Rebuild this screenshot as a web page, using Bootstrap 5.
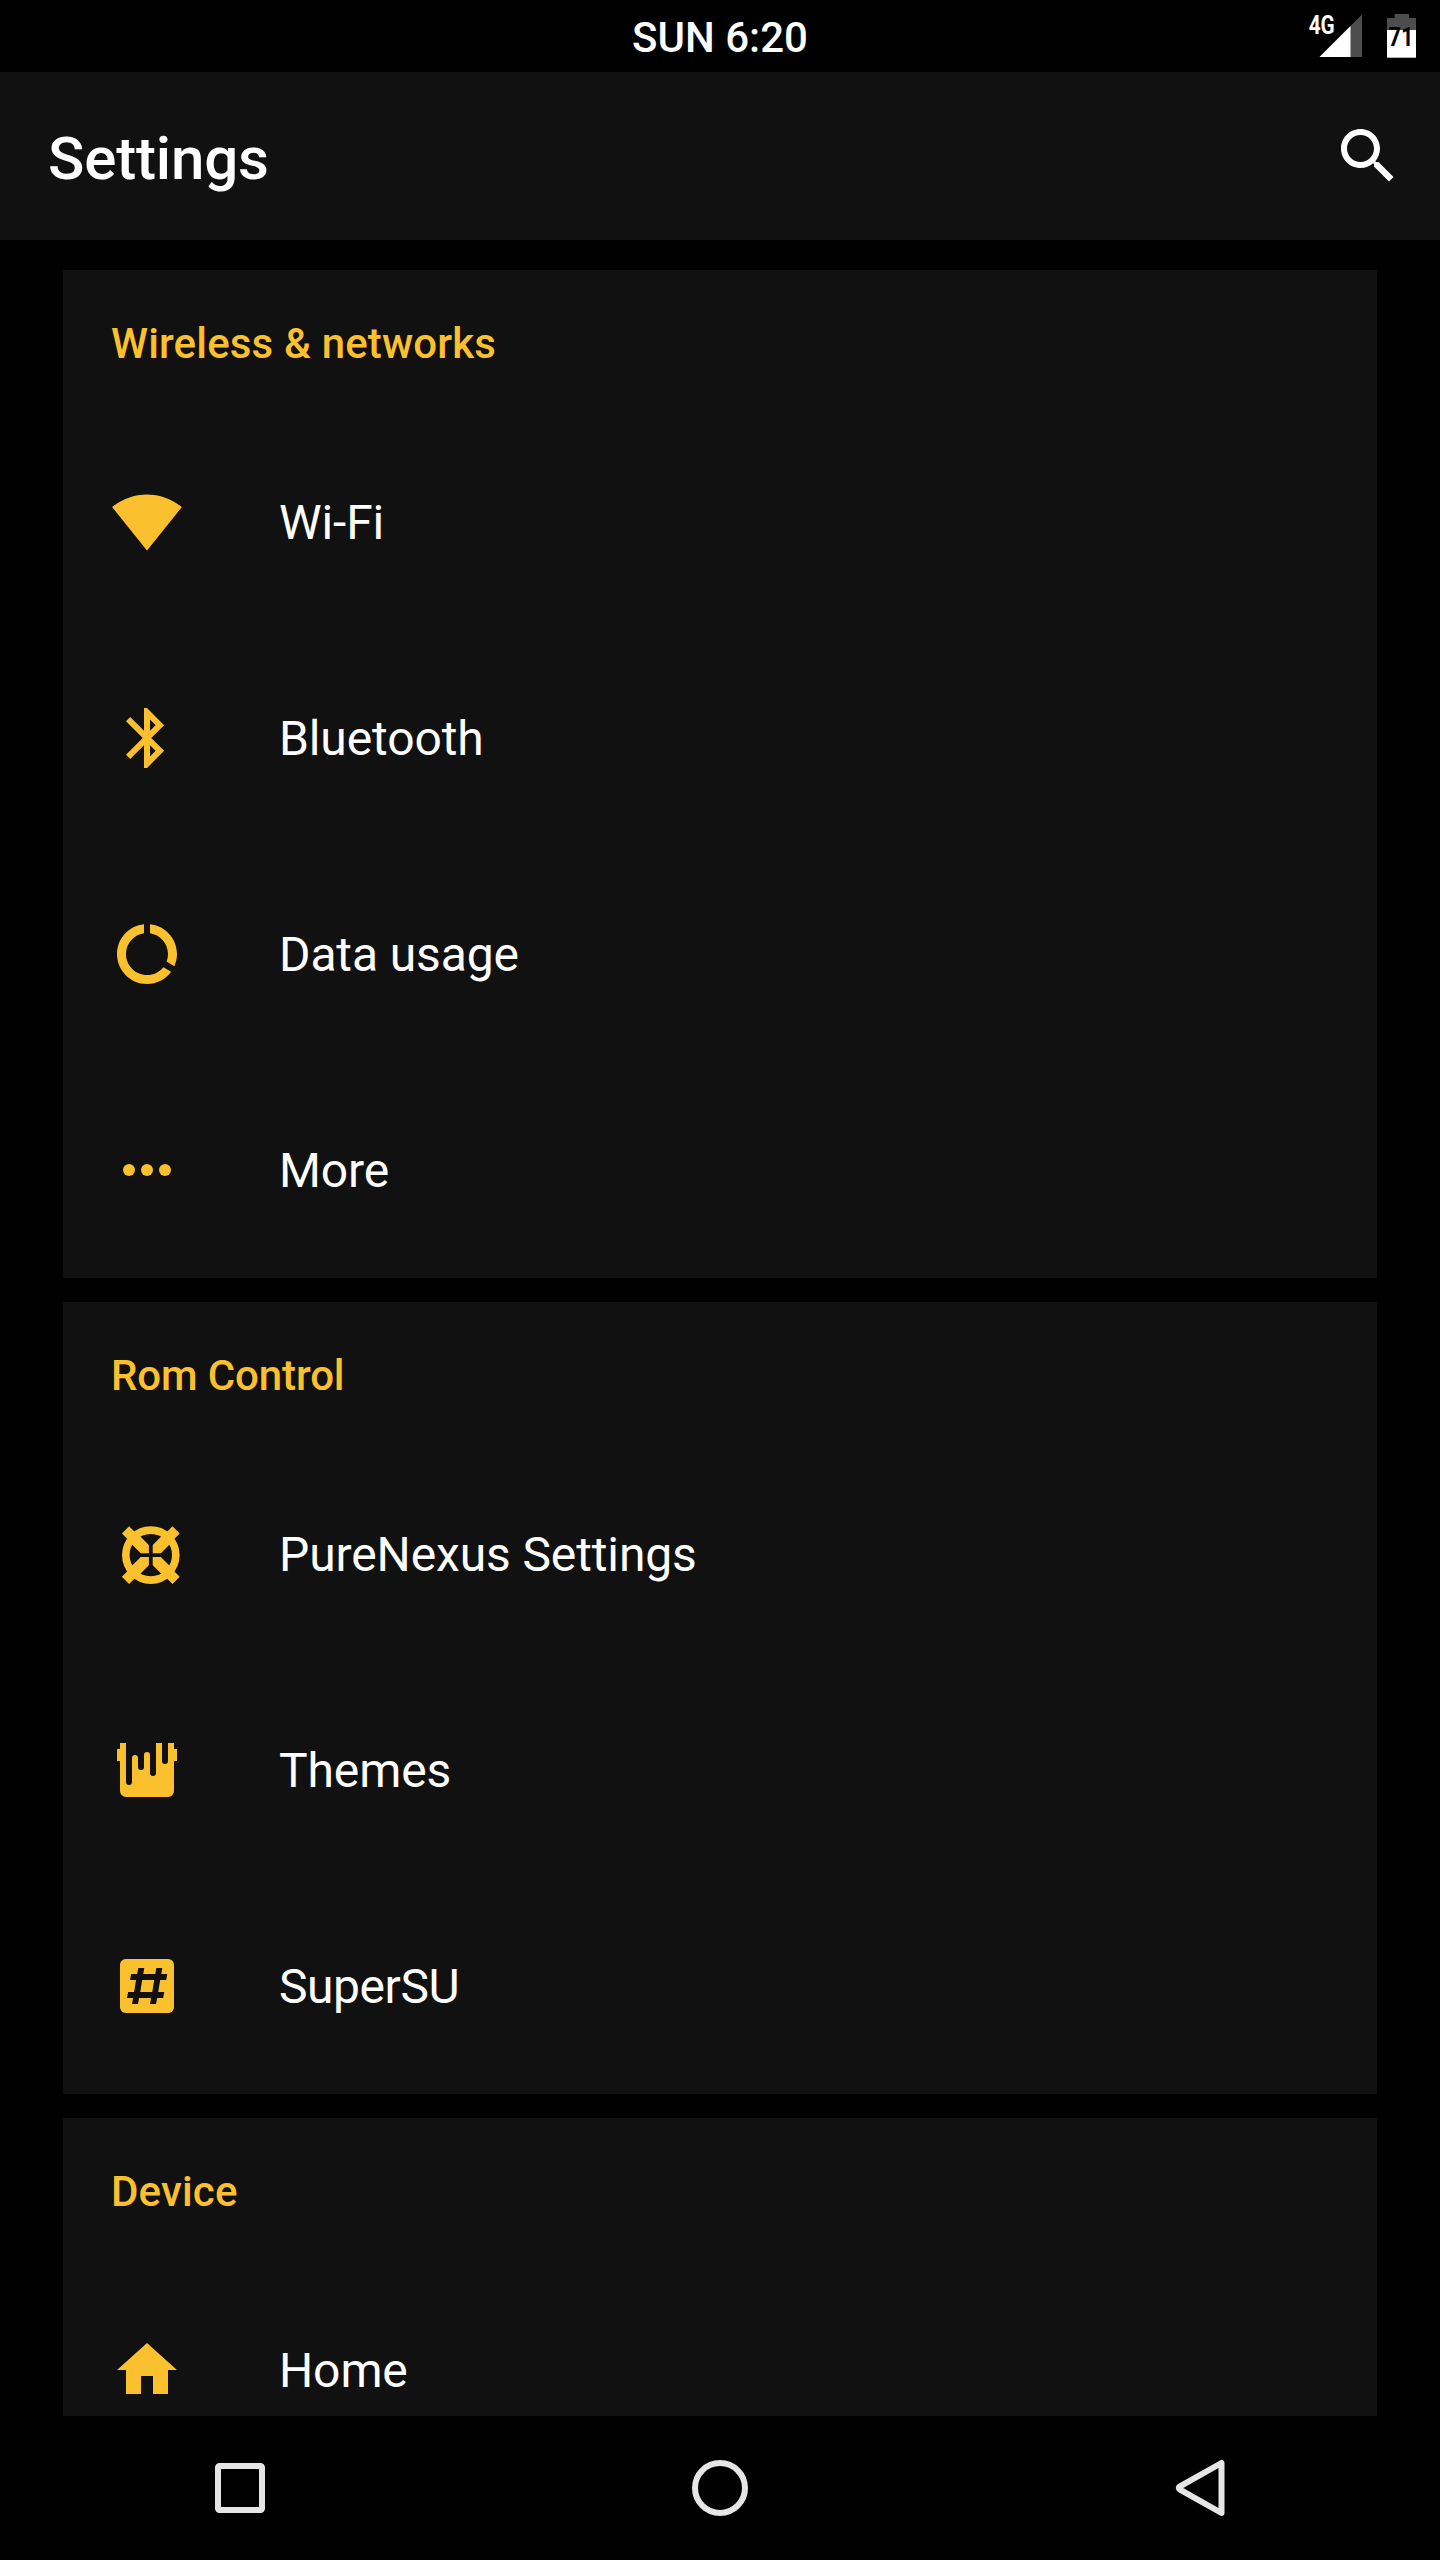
<!DOCTYPE html>
<html lang="en">
<head>
<meta charset="utf-8">
<meta name="viewport" content="width=device-width, initial-scale=1">
<title>Settings</title>
<link href="https://cdn.jsdelivr.net/npm/bootstrap@5.3.0/dist/css/bootstrap.min.css" rel="stylesheet">
<style>
  body { background: #000; color: #fff; font-family: Roboto, sans-serif; }
  .screen { width: 1440px; height: 2560px; }
  .status { display: grid; grid-template-columns: 1fr auto 1fr; height: 72px; padding: 0 20px; }
  .clock { font-size: 42px; line-height: 50px; font-weight: 500; padding-top: 4px; }
  .appbar { height: 168px; padding: 0 36px 0 48px; background: #111; }
  .appbar h1 { font-size: 60px; font-weight: 500; line-height: 72px; padding-top: 6px; letter-spacing: -.15px; }
  .content-area { min-height: 0; padding: 30px 63px 0; gap: 24px; }
  .panel { background: #111; border: 0; border-radius: 0; color: #fff; }
  .panel-title { height: 144px; padding: 3px 48px 0; color: #fbc02d; font-size: 42px; font-weight: 500; line-height: 50px; }
  .entry { height: 216px; padding: 0 48px; gap: 96px; background: transparent; border: 0; color: #fff; font-size: 48px; line-height: 56px; }
  .entry span { padding-top: 2px; letter-spacing: -.12px; }
  .entry .tight { letter-spacing: -.45px; }
  .loose { letter-spacing: .16px; }
  .snug { letter-spacing: -.12px; }
  .glyph { width: 72px; height: 72px; fill: #fbc02d; }
  .softkeys { height: 144px; background: #000; }
  .softkeys svg { width: 72px; height: 72px; fill: none; stroke: #e6e6e6; stroke-width: 6; }
</style>
</head>
<body>
<div class="screen d-flex flex-column overflow-hidden">
  <header class="status align-items-center flex-shrink-0">
    <span></span>
    <span class="clock">SUN 6:20</span>
    <svg class="ms-auto" width="112" height="72" viewBox="0 0 112 72">
      <path d="M11.5 57H54V14.5z" fill="#4d4d4d"/>
      <path d="M11.5 57H42.5V26z" fill="#fff"/>
      <text x="0.7" y="33.5" font-size="25.5" font-weight="700" fill="#fff" textLength="26" lengthAdjust="spacingAndGlyphs">4G</text>
      <path d="M79 30V18h7.5v-4H101v4h7v12z" fill="#4d4d4d"/>
      <path d="M79 30h29v27.7H79z" fill="#fff"/>
      <text x="80.5" y="46" font-size="26" font-weight="700" fill="#000" textLength="25" lengthAdjust="spacingAndGlyphs">71</text>
    </svg>
  </header>

  <nav class="appbar d-flex align-items-center justify-content-between flex-shrink-0">
    <h1 class="mb-0">Settings</h1>
    <svg width="72" height="72" viewBox="0 0 24 24" fill="#fff"><path d="M15.5 14h-.79l-.28-.27C15.41 12.59 16 11.11 16 9.5 16 5.91 13.09 3 9.5 3S3 5.91 3 9.5 5.91 16 9.5 16c1.61 0 3.09-.59 4.23-1.57l.27.28v.79l5 4.99L20.49 19l-4.99-5zm-6 0C7.01 14 5 11.99 5 9.5S7.01 5 9.5 5 14 7.01 14 9.5 11.99 14 9.5 14z"/></svg>
  </nav>

  <main class="content-area d-flex flex-column flex-grow-1 overflow-hidden">
    <section class="card panel flex-shrink-0">
      <h2 class="panel-title loose d-flex align-items-center mb-0">Wireless &amp; networks</h2>
      <div class="list-group list-group-flush">
        <div class="list-group-item entry d-flex align-items-center">
          <svg class="glyph" viewBox="0 0 24 24"><path d="M12.01 21.49L23.64 7C23.19 6.66 18.71 2.8 12 2.8S.81 6.66.36 7l11.63 14.49.01.01z"/></svg>
          <span>Wi-Fi</span>
        </div>
        <div class="list-group-item entry d-flex align-items-center">
          <svg class="glyph" viewBox="0 0 24 24"><path d="M17.71 7.71L12 2h-1v7.59L6.41 5 5 6.41 10.59 12 5 17.59 6.41 19 11 14.41V22h1l5.71-5.71-4.3-4.29 4.3-4.29zM13 5.83l1.88 1.88L13 9.59V5.83zm1.88 10.46L13 18.17v-3.76l1.88 1.88z"/></svg>
          <span>Bluetooth</span>
        </div>
        <div class="list-group-item entry d-flex align-items-center">
          <svg class="glyph" viewBox="0 0 24 24"><path d="M13 2.05v3.03c3.39.49 6 3.39 6 6.92 0 .9-.18 1.75-.48 2.54l2.6 1.53c.56-1.24.88-2.62.88-4.07 0-5.18-3.95-9.45-9-9.95zM12 19c-3.87 0-7-3.13-7-7 0-3.53 2.61-6.43 6-6.92V2.05c-5.06.5-9 4.76-9 9.95 0 5.52 4.47 10 9.99 10 3.31 0 6.24-1.61 8.06-4.09l-2.6-1.53C16.17 17.98 14.21 19 12 19z"/></svg>
          <span>Data usage</span>
        </div>
        <div class="list-group-item entry d-flex align-items-center">
          <svg class="glyph" viewBox="0 0 24 24"><circle cx="6" cy="12" r="2"/><circle cx="12" cy="12" r="2"/><circle cx="18" cy="12" r="2"/></svg>
          <span>More</span>
        </div>
      </div>
    </section>

    <section class="card panel flex-shrink-0">
      <h2 class="panel-title snug d-flex align-items-center mb-0">Rom Control</h2>
      <div class="list-group list-group-flush">
        <div class="list-group-item entry d-flex align-items-center">
          <svg class="glyph" viewBox="0 0 72 72">
            <g fill="none" transform="translate(39.8 37.1)">
              <circle r="25" stroke="#fbc02d" stroke-width="7.6"/>
              <path d="M-25.3-25.3L25.3 25.3M25.3-25.3L-25.3 25.3" stroke="#fbc02d" stroke-width="10.2"/>
              <path d="M-18-18L18 18M18-18L-18 18" stroke="#fbc02d" stroke-width="11.4"/>
              <path d="M-12 0H12M0-12V12" stroke="#111" stroke-width="3.8"/>
            </g>
          </svg>
          <span>PureNexus Settings</span>
        </div>
        <div class="list-group-item entry d-flex align-items-center">
          <svg class="glyph" viewBox="0 0 24 24"><path d="M3 3h2v13a1 1 0 0 0 2 0V8a1 1 0 0 1 2 0v3a1 1 0 0 0 2 0V7a1 1 0 0 1 2 0v6a1 1 0 0 0 2 0V3h2v6a1 1 0 0 0 2 0V3h2v2h1v4h-1v10a2 2 0 0 1-2 2H5a2 2 0 0 1-2-2V9H2V5h1z"/></svg>
          <span>Themes</span>
        </div>
        <div class="list-group-item entry d-flex align-items-center">
          <svg class="glyph" viewBox="0 0 24 24"><rect x="3" y="3" width="18" height="18" rx="1.9"/><path fill="#111" d="M9.1 6h2l-.35 2h4l.35-2h2l-.35 2h2l-.35 2h-2l-.65 4h2l-.35 2h-2L15 18h-2l.35-2h-4L9 18H7l.35-2h-2l.35-2h2l.65-4h-2l.35-2h2zM10.4 10l-.65 4h4l.65-4z" fill-rule="evenodd"/></svg>
          <span class="tight">SuperSU</span>
        </div>
      </div>
    </section>

    <section class="card panel flex-shrink-0">
      <h2 class="panel-title loose d-flex align-items-center mb-0">Device</h2>
      <div class="list-group list-group-flush">
        <div class="list-group-item entry d-flex align-items-center">
          <svg class="glyph" viewBox="0 0 24 24"><path d="M10 20v-6h4v6h5v-8h3L12 3 2 12h3v8z"/></svg>
          <span>Home</span>
        </div>
      </div>
    </section>
  </main>

  <footer class="softkeys row g-0 align-items-center text-center flex-shrink-0">
    <div class="col-4"><svg viewBox="0 0 72 72"><rect x="14" y="14" width="44" height="44" rx="1.5"/></svg></div>
    <div class="col-4"><svg viewBox="0 0 72 72"><circle cx="36" cy="36" r="25"/></svg></div>
    <div class="col-4"><svg viewBox="0 0 72 72"><path d="M57.5 11V61L16 37.6Q13.5 36 16 34.4z" stroke-linejoin="round"/></svg></div>
  </footer>
</div>
<script src="https://cdn.jsdelivr.net/npm/bootstrap@5.3.0/dist/js/bootstrap.bundle.min.js"></script>
</body>
</html>
